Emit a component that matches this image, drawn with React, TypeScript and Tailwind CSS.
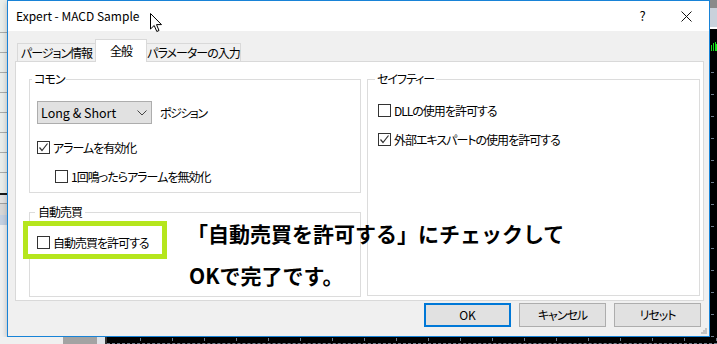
import React from "react";

const Check = ({ checked }: { checked?: boolean }) => (
  <span className="flex h-[13px] w-[13px] shrink-0 items-center justify-center border border-[#333333] bg-white">
    {checked && (
      <svg width="11" height="11" viewBox="0 0 11 11">
        <polyline
          points="1.5,5.5 4,8.5 9.5,1.5"
          fill="none"
          stroke="#333333"
          strokeWidth="1.2"
        />
      </svg>
    )}
  </span>
);

const CheckRow = ({
  label,
  checked,
  className = "",
}: {
  label: string;
  checked?: boolean;
  className?: string;
}) => (
  <div className={`flex h-[13px] items-center gap-[3px] ${className}`}>
    <Check checked={checked} />
    <span className="whitespace-nowrap leading-[13px] tracking-[-1px]">{label}</span>
  </div>
);

const Group = ({
  title,
  labelClass,
  className = "",
  children,
}: {
  title: string;
  labelClass: string;
  className?: string;
  children: React.ReactNode;
}) => (
  <div className={`relative border border-[#dcdcdc] ${className}`}>
    <span
      className={`absolute top-[-9px] bg-white leading-[16px] whitespace-nowrap tracking-[-1px] ${labelClass}`}
    >
      {title}
    </span>
    {children}
  </div>
);

const LeftStrip = () => (
  <div className="flex h-full w-[7px] flex-col bg-[#f0f0f0]">
    <div className="h-[32px] bg-[#e9eeeb]" />
    {[0, 1, 2, 3, 4, 5, 6, 7].map((i) => (
      <div key={i} className="h-[20px] border-t border-[#a9acaa] bg-[#e9eeeb]" />
    ))}
    <div className="h-[1px] bg-[#e9eeeb]" />
    <div className="h-[2px] bg-[#1a1a1a]" />
    <div className="h-[8px] bg-[#e3e3e3]" />
    <div className="h-[12px] border-t border-[#a0a0a0] bg-[#d8d8d8]" />
    <div className="h-[10px] bg-[#c5d1e2]" />
    <div className="flex-1 bg-[#f0f0f0]" />
  </div>
);

const RightStrip = () => (
  <div className="flex h-full w-[7px] flex-col bg-black">
    <div className="h-[9px] bg-[#8a8a8a]" />
    <div className="h-[21px] bg-[#c9d1db]" />
    <div className="h-[2px] bg-white" />
    <div className="h-[15px]" />
    <div className="flex h-[9px] items-end gap-[1px] pl-[1px]">
      <div className="h-[6px] w-[1px] bg-[#16e016]" />
      <div className="h-[8px] w-[1px] bg-[#16e016]" />
      <div className="h-[9px] w-[1px] bg-[#16e016]" />
      <div className="h-[7px] w-[1px] bg-[#16e016]" />
    </div>
    <div className="flex flex-col">
      {Array.from({ length: 13 }).map((_, i) => (
        <div key={i} className="flex h-[22px] items-end">
          <div className="ml-[1px] h-[1px] w-[3px] bg-[#6e7b8a]" />
        </div>
      ))}
    </div>
  </div>
);

const BottomStrip = () => (
  <div className="flex h-[7px] w-full">
    <div className="w-[70px] bg-[#f0f0f0]" />
    <div className="w-[38px] bg-[#a3a3a3]" />
    <div className="w-[9px] bg-[#dfe3e8]" />
    <div className="w-[2px] bg-[#333333]" />
    <div className="flex flex-1 flex-col bg-black">
      <div className="flex h-[6px] items-start gap-[31px] pl-[33px]">
        {Array.from({ length: 19 }).map((_, i) => (
          <div key={i} className="mt-[1px] h-[3px] w-[1px] bg-[#6e7b8a]" />
        ))}
      </div>
      <div className="h-[1px] border-t border-dashed border-[#6e7b8a]" />
    </div>
  </div>
);

export default function App() {
  return (
    <div className="relative h-[344px] w-[717px] overflow-hidden bg-[#f0f0f0] font-['Noto_Sans_CJK_JP',sans-serif] text-[12px] text-black [font-feature-settings:'palt']">
      <div className="flex h-[337px]">
        <LeftStrip />
        <div className="flex h-[337px] w-[703px] flex-col border border-[#1883d7] bg-[#f0f0f0] shadow-[0_2px_6px_rgba(0,0,0,0.25)]">
          {/* title bar */}
          <div className="flex h-[30px] items-center bg-white pl-[8px]">
            <span className="whitespace-nowrap">Expert - MACD Sample</span>
            <span className="ml-auto flex w-[46px] justify-center pl-[5px] text-[13px]">?</span>
            <span className="flex w-[46px] justify-center">
              <svg width="11" height="11" viewBox="0 0 11 11">
                <path d="M0.5 0.5 L10.5 10.5 M10.5 0.5 L0.5 10.5" stroke="#111" strokeWidth="1" />
              </svg>
            </span>
          </div>

          {/* tabs */}
          <div className="mt-[8px] ml-[9px] flex h-[22px] items-end whitespace-nowrap tracking-[-1px]">
            <div className="flex h-[18px] w-[79px] items-center justify-center border border-b-0 border-[#d9d9d9] bg-[#f0f0f0] leading-[16px]">
              パージョン情報
            </div>
            <div className="relative z-10 -mb-px -ml-px flex h-[23px] w-[52px] items-start justify-center border border-b-0 border-[#d9d9d9] bg-white pt-[3px] leading-[16px]">
              全般
            </div>
            <div className="-ml-px flex h-[18px] w-[95px] items-center justify-center border border-b-0 border-[#d9d9d9] bg-[#f0f0f0] leading-[16px]">
              パラメーターの入力
            </div>
          </div>

          {/* panel */}
          <div className="ml-[7px] flex h-[240px] w-[689px] gap-[6px] border border-[#d9d9d9] bg-white pt-[17px] pr-[3px] pl-[13px]">
            <div className="flex w-[332px] flex-col gap-[19px]">
              <Group title="コモン" labelClass="left-[2px] px-[2px]" className="h-[114px] pt-[21px] pl-[7px]">
                <div className="flex items-center gap-[8px]">
                  <div className="flex h-[23px] w-[115px] items-center justify-between border border-[#adadad] bg-[#e1e1e1] pr-[4px] pl-[3px]">
                    <span className="text-[12.5px] leading-[16px] whitespace-nowrap">Long &amp; Short</span>
                    <svg width="10" height="6" viewBox="0 0 10 6">
                      <polyline points="0.5,0.5 5,5 9.5,0.5" fill="none" stroke="#444" strokeWidth="1" />
                    </svg>
                  </div>
                  <span className="tracking-[-1.5px]">ポジション</span>
                </div>
                <CheckRow label="アラームを有効化" checked className="mt-[17px]" />
                <CheckRow label="1回鳴ったらアラームを無効化" className="mt-[16px] ml-[18px]" />
              </Group>
              <Group title="自動売買" labelClass="left-[5px] px-[3px]" className="h-[85px] pt-[8px]">
                <div className="-ml-[7px] h-[38px] w-[144px] border-[5px] border-[#b5e61d] bg-white pt-[10px] pl-[9px]">
                  <CheckRow label="自動売買を許可する" />
                </div>
              </Group>
            </div>
            <Group title="セイフティー" labelClass="left-[7px] px-[2px]" className="h-[217px] w-[333px] pt-[24px] pl-[10px]">
              <CheckRow label="DLLの使用を許可する" />
              <CheckRow label="外部エキスパートの使用を許可する" checked className="mt-[16px]" />
            </Group>
          </div>

          {/* buttons */}
          <div className="mt-[2px] flex justify-end gap-[8px] pr-[8px] tracking-[-1px]">
            <button className="h-[24px] w-[87px] border-2 border-[#0078d7] bg-[#e1e1e1] tracking-normal">OK</button>
            <button className="h-[24px] w-[87px] border border-[#adadad] bg-[#e1e1e1]">キャンセル</button>
            <button className="h-[24px] w-[87px] border border-[#adadad] bg-[#e1e1e1]">リセット</button>
          </div>
          <div className="mt-auto mr-[2px] mb-[2px] flex justify-end">
            <svg width="6" height="6" viewBox="0 0 6 6">
              <rect x="4" y="0" width="2" height="2" fill="#c4c4c4" />
              <rect x="2" y="2" width="2" height="2" fill="#c4c4c4" />
              <rect x="4" y="2" width="2" height="2" fill="#c4c4c4" />
              <rect x="0" y="4" width="2" height="2" fill="#c4c4c4" />
              <rect x="2" y="4" width="2" height="2" fill="#c4c4c4" />
              <rect x="4" y="4" width="2" height="2" fill="#c4c4c4" />
            </svg>
          </div>
        </div>
        <RightStrip />
      </div>
      <BottomStrip />

      {/* annotation text */}
      <div className="absolute top-[212px] left-[187px] text-[21px] leading-[42px] font-bold whitespace-nowrap [font-feature-settings:normal]">
        <div>「自動売買を許可する」にチェックして</div>
        <div className="ml-[2px]">OKで完了です。</div>
      </div>

      {/* mouse cursor */}
      <svg className="absolute top-[13px] left-[150px]" width="13" height="20" viewBox="0 0 13 20">
        <path
          d="M0.5 0.5 L0.5 16 L4.2 12.5 L6.8 18.5 L9 17.5 L6.5 11.6 L11.5 11.6 Z"
          fill="#fff"
          stroke="#000"
          strokeWidth="1"
          strokeLinejoin="round"
        />
      </svg>
    </div>
  );
}
